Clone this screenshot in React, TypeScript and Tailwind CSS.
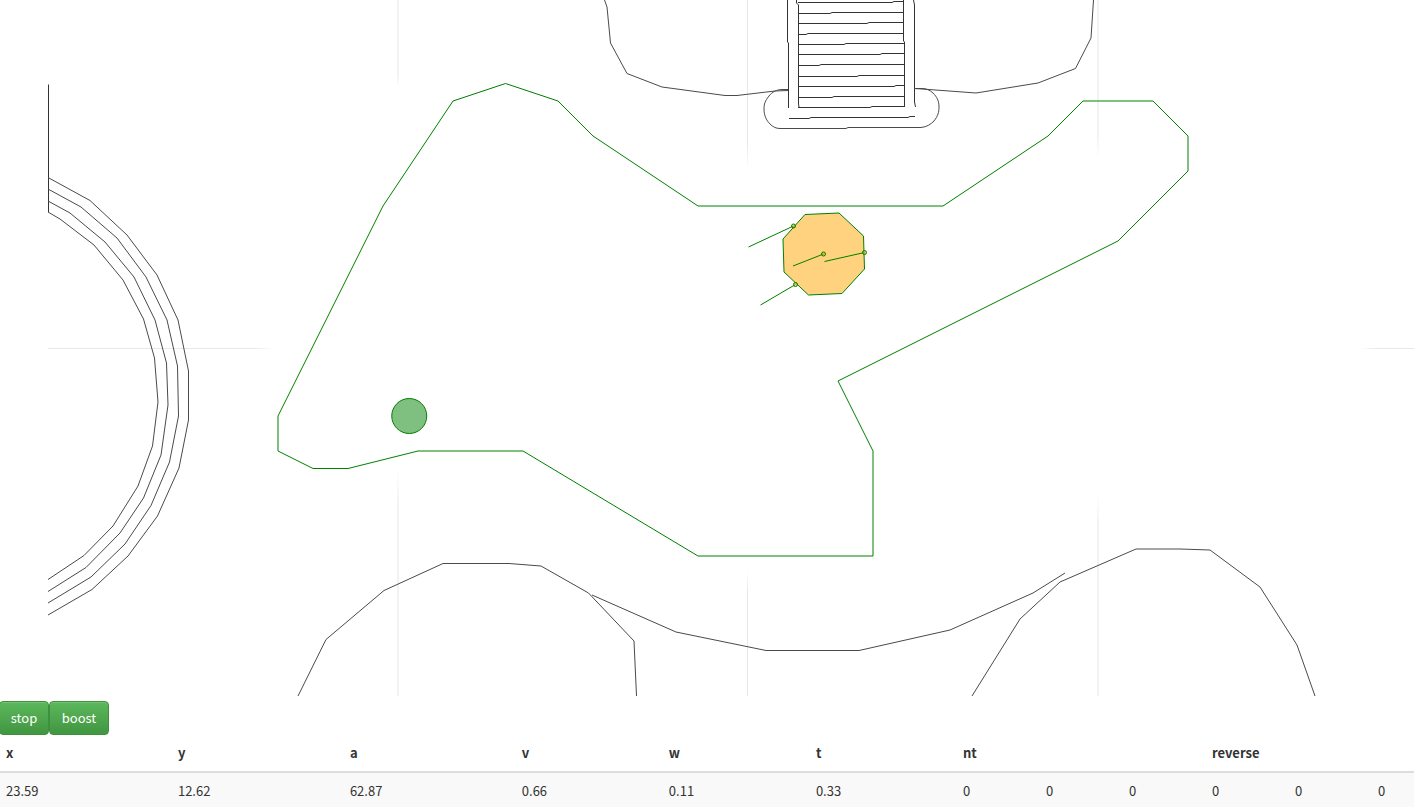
const rungs: [number, number][] = [
  [2, 893], [13, 831], [23, 868], [34, 807], [44, 845], [54, 881],
  [65, 820], [76, 858], [86, 895], [97, 833], [107, 871],
];

const edges = [
  "48.5,84.5 48.5,212",
  "787.5,0 787.5,42 788.5,43 788.5,108",
  "796.5,0 796.5,3 798.5,5 798.5,104 799,107",
  "903.5,0 903.5,41 904.5,42 904.5,107",
  "913.5,0 914.5,5 914.5,102 915.5,107",
  "789,118.5 809,118.5 811,117.5 908,117.5 910,116.5 915,116.5",
];

const curves = [
  "48,177.5 90,200.5 127,235 157,275 178,320 188.5,371 188.5,420 179,468 157.5,516 128,556 92,589.5 48,615",
  "48,189 81,207 117,238 146,277 167,320 177.5,366 178.5,416 169.5,462 151,505.5 125,544 91,577 48,603",
  "48,201 70,213 105,242 134,277 155,320 166.5,363 168,405 161,455 143.5,498 120,533 86,567.5 48,591.5",
  "48,212 60,219 94,245 123,280 143.5,319 154.5,358 158,402 152.5,446 138,486 113,526 84,555.5 48,579.5",
  "604.5,0 607,7 610.5,43 627,73.5 662,87 725,95.5 737,95.5 775,91 788,90.5",
  "1093.5,0 1091,38 1075.5,68.5 1038,83 976,93 922,89 914,88.5",
  "298,696 326,639.5 384,590.5 443,563.5 509,563.5 541,566 588.5,593 634,641 636.5,696",
  "592,595 676,632 766,650.5 859,650.5 950,630 1033,593 1065,573",
  "972,696 1020,619 1060,582 1136,549 1180,549 1210,550 1260,587 1297,645 1315,696",
];

const sensors = [
  { x: 793.5, y: 226, tx: 748.5, ty: 247 },
  { x: 823.5, y: 254, tx: 793, ty: 266 },
  { x: 864.5, y: 252.5, tx: 824.5, ty: 261.5 },
  { x: 795.5, y: 284.5, tx: 760.5, ty: 305 },
];

const columns = [
  "w-[12.16%]", "w-[12.16%]", "w-[12.16%]", "w-[10.4%]", "w-[10.4%]", "w-[10.4%]",
  "w-[5.87%]", "w-[5.87%]", "w-[5.87%]", "w-[5.87%]", "w-[5.87%]", "",
];

const headers = [
  { label: "x", span: 1 }, { label: "y", span: 1 }, { label: "a", span: 1 },
  { label: "v", span: 1 }, { label: "w", span: 1 }, { label: "t", span: 1 },
  { label: "nt", span: 3 }, { label: "reverse", span: 3 },
];

const values = ["23.59", "12.62", "62.87", "0.66", "0.11", "0.33", "0", "0", "0", "0", "0", "0"];

function FieldMap() {
  return (
    <svg className="block h-[696px] w-full" role="img" aria-label="Field map">
      <defs>
        <linearGradient id="fadeDown" x1="0" y1="0" x2="0" y2="1">
          <stop offset="0.85" stopColor="#000" />
          <stop offset="1" stopColor="#000" stopOpacity="0" />
        </linearGradient>
        <linearGradient id="fadeUp" x1="0" y1="0" x2="0" y2="1">
          <stop offset="0" stopColor="#000" stopOpacity="0" />
          <stop offset="0.15" stopColor="#000" />
        </linearGradient>
        <linearGradient id="fadeRight">
          <stop offset="0.9" stopColor="#000" />
          <stop offset="1" stopColor="#000" stopOpacity="0" />
        </linearGradient>
        <linearGradient id="fadeLeft">
          <stop offset="0" stopColor="#000" stopOpacity="0" />
          <stop offset="0.3" stopColor="#000" />
        </linearGradient>
      </defs>
      <g transform="translate(-48 0)">
        <g>
          <rect x="397" y="0" width="2" height="88" fill="url(#fadeDown)" opacity="0.05" />
          <rect x="397" y="470" width="2" height="226" fill="url(#fadeUp)" opacity="0.05" />
          <rect x="747" y="0" width="1" height="170" fill="url(#fadeDown)" opacity="0.09" />
          <rect x="747" y="572" width="1" height="124" fill="url(#fadeUp)" opacity="0.09" />
          <rect x="1097" y="0" width="2" height="158" fill="url(#fadeDown)" opacity="0.05" />
          <rect x="1097" y="494" width="2" height="202" fill="url(#fadeUp)" opacity="0.05" />
          <rect x="48" y="348" width="228" height="1" fill="url(#fadeRight)" opacity="0.09" />
          <rect x="1360" y="348" width="54" height="1" fill="url(#fadeLeft)" opacity="0.09" />
        </g>
        <g fill="none" stroke="#333">
          {edges.map((points) => (
            <polyline key={points} points={points} />
          ))}
          {rungs.map(([y, step]) => (
            <polyline
              key={y}
              points={`798,${y + 0.5} ${step - 1},${y + 0.5} ${step + 1},${y - 0.5} 904,${y - 0.5}`}
            />
          ))}
        </g>
        <g fill="none" stroke="#4a4a4a">
          {curves.map((points) => (
            <polyline key={points} points={points} />
          ))}
          <path d="M788 89.5H782C777 89.5 772 92 769 96C765 101 764 104 764 109C764 115 766 120 770 124C773 127 776 128.5 780 128.5H846L848 127.5H921C927 127 931 124 934 121C938 116 939 112 939 107C939 101 937 97 933 93C930 90 926 88.5 922 88.5H914" />
        </g>
        <g stroke="green">
          <polygon
            fill="none"
            points="505.5,83.5 558,101 593,136 698,206 943,206 1048,136 1083,101 1153,101 1188,136 1188,171 1118,241 838,381 873,451 873,556 698,556 523,451 418,451 348,468.5 313,468.5 278,451 278,416 383,206 453,101"
          />
          <circle cx="409.25" cy="416" r="17.5" fill="green" fillOpacity="0.5" />
          <polygon
            fill="orange"
            fillOpacity="0.5"
            points="805,214.5 839,213 863.5,236 864.5,269 842,293.5 808.5,295 784,272 783,239"
          />
          {sensors.map((s) => (
            <g key={s.x}>
              <line x1={s.x} y1={s.y} x2={s.tx} y2={s.ty} />
              <circle cx={s.x} cy={s.y} r="2" fill="orange" fillOpacity="0.5" />
            </g>
          ))}
        </g>
      </g>
    </svg>
  );
}

const buttonClass =
  "h-[34px] rounded border border-[#3e8f3e] bg-linear-to-b from-[#5cb85c] to-[#419641] text-white shadow-[inset_0_1px_0_rgba(255,255,255,0.15)]";

export default function App() {
  return (
    <main className="h-screen overflow-hidden bg-white font-['Noto_Sans_CJK_SC',sans-serif] text-[13px] leading-5 text-[#333]">
      <div className="pl-12">
        <FieldMap />
      </div>
      <div className="flex pt-[5px]">
        <button type="button" className={`${buttonClass} -ml-px w-[50px]`}>stop</button>
        <button type="button" className={`${buttonClass} w-[60px]`}>boost</button>
      </div>
      <table className="w-full table-fixed border-collapse text-left">
        <colgroup>
          {columns.map((width, i) => (
            <col key={i} className={width} />
          ))}
        </colgroup>
        <thead>
          <tr className="border-b-2 border-[#ddd]">
            {headers.map((h) => (
              <th key={h.label} colSpan={h.span} className="px-1.5 py-2 font-bold">{h.label}</th>
            ))}
          </tr>
        </thead>
        <tbody>
          <tr className="bg-[#f9f9f9]">
            {values.map((v, i) => (
              <td key={i} className="px-1.5 py-2">{v}</td>
            ))}
          </tr>
        </tbody>
      </table>
    </main>
  );
}
